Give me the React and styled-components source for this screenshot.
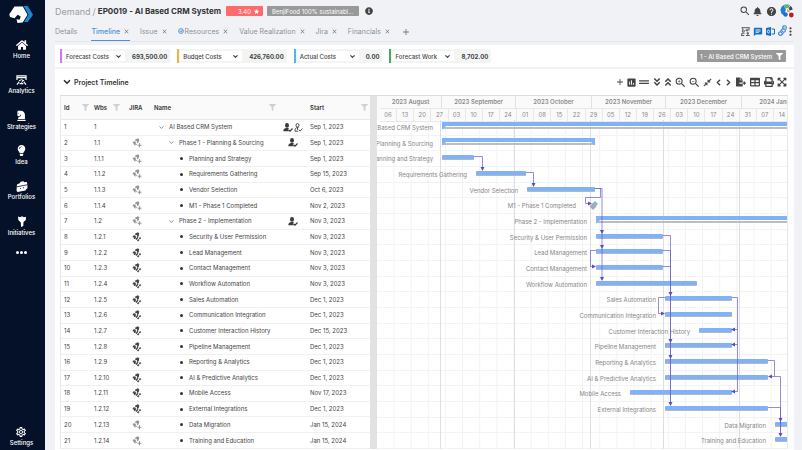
import React from "react";
import styled, { createGlobalStyle } from "styled-components";
import {
  FaHome,
  FaLightbulb,
  FaChessKnight,
  FaFilter,
  FaInfoCircle,
  FaBell,
  FaAngleDoubleDown,
  FaAngleDoubleUp,
  FaCompressAlt,
  FaFileExport,
  FaTable,
  FaPrint,
  FaExpandArrowsAlt,
  FaGripLines,
  FaLink,
  FaStar,
} from "react-icons/fa";
import {
  MdAdd,
  MdAssessment,
  MdClose,
  MdHelp,
  MdMoreVert,
  MdOutlineSettings,
  MdSearch,
  MdZoomIn,
  MdZoomOut,
  MdChat,
} from "react-icons/md";
import { ChevronDown, ChevronLeft, ChevronRight } from "lucide-react";

const HEAD_HEIGHT = 24;
const BODY_HEIGHT = 329;
const DAY = 120 / 49;

const metrics = [
  { label: "Forecast Costs", value: "693,500.00", color: "#cf7be6" },
  { label: "Budget Costs", value: "426,760.00", color: "#f2b33d" },
  { label: "Actual Costs", value: "0.00", color: "#53b9e0" },
  { label: "Forecast Work", value: "8,702.00", color: "#43b059" },
];

const tabs = [
  { label: "Details" },
  { label: "Timeline", active: true, closable: true },
  { label: "Issue", closable: true },
  { label: "Resources", closable: true, checked: true },
  { label: "Value Realization", closable: true },
  { label: "Jira", closable: true },
  { label: "Financials", closable: true },
];

// from / to are offsets on the time scale, in px
const tasks = [
  { wbs: "1", name: "AI Based CRM System", start: "Sep 1, 2023", level: 0, people: 2, from: 65, to: 520 },
  { wbs: "1.1", name: "Phase 1 - Planning & Sourcing", start: "Sep 1, 2023", level: 1, people: 1, jira: "add", from: 65, to: 218 },
  { wbs: "1.1.1", name: "Planning and Strategy", start: "Sep 1, 2023", level: 2, jira: "add", from: 65, to: 97 },
  { wbs: "1.1.2", name: "Requirements Gathering", start: "Sep 15, 2023", level: 2, jira: "add", from: 99, to: 149 },
  { wbs: "1.1.3", name: "Vendor Selection", start: "Oct 6, 2023", level: 2, jira: "add", from: 150, to: 218 },
  { wbs: "1.1.4", name: "M1 - Phase 1 Completed", start: "Nov 2, 2023", level: 2, jira: "add", milestone: true, from: 208, to: 218 },
  { wbs: "1.2", name: "Phase 2 - Implementation", start: "Nov 3, 2023", level: 1, people: 1, jira: "add", from: 219, to: 520 },
  { wbs: "1.2.1", name: "Security & User Permission", start: "Nov 3, 2023", level: 2, jira: "linked", from: 219, to: 286 },
  { wbs: "1.2.2", name: "Lead Management", start: "Nov 3, 2023", level: 2, jira: "linked", from: 219, to: 286 },
  { wbs: "1.2.3", name: "Contact Management", start: "Nov 3, 2023", level: 2, jira: "linked", from: 219, to: 286 },
  { wbs: "1.2.4", name: "Workflow Automation", start: "Nov 3, 2023", level: 2, jira: "linked", from: 219, to: 320 },
  { wbs: "1.2.5", name: "Sales Automation", start: "Dec 1, 2023", level: 2, jira: "linked", from: 288, to: 355 },
  { wbs: "1.2.6", name: "Communication Integration", start: "Dec 1, 2023", level: 2, jira: "linked", from: 288, to: 355 },
  { wbs: "1.2.7", name: "Customer Interaction History", start: "Dec 15, 2023", level: 2, jira: "linked", from: 322, to: 355 },
  { wbs: "1.2.8", name: "Pipeline Management", start: "Dec 1, 2023", level: 2, jira: "linked", from: 288, to: 355 },
  { wbs: "1.2.9", name: "Reporting & Analytics", start: "Dec 1, 2023", level: 2, jira: "linked", from: 288, to: 391 },
  { wbs: "1.2.10", name: "AI & Predictive Analytics", start: "Dec 1, 2023", level: 2, jira: "linked", from: 288, to: 391 },
  { wbs: "1.2.11", name: "Mobile Access", start: "Nov 17, 2023", level: 2, jira: "linked", from: 253, to: 355 },
  { wbs: "1.2.12", name: "External Integrations", start: "Dec 1, 2023", level: 2, jira: "linked", from: 288, to: 391 },
  { wbs: "1.2.13", name: "Data Migration", start: "Jan 15, 2024", level: 2, jira: "add", from: 398, to: 440 },
  { wbs: "1.2.14", name: "Training and Education", start: "Jan 15, 2024", level: 2, jira: "add", from: 398, to: 440 },
];

const columns = [
  { name: "Id", width: 30, filter: true },
  { name: "Wbs", width: 31, filter: true },
  { name: "JIRA", width: 29, indent: 7 },
  { name: "Name", width: 127, filter: true },
  { name: "", width: 29 },
  { name: "Start", width: 63, filter: true },
];

const months = [
  { name: "2023 August", width: 62 },
  { name: "2023 September", width: 74 },
  { name: "2023 October", width: 76 },
  { name: "2023 November", width: 74 },
  { name: "2023 December", width: 76 },
  { name: "2024 January", width: 76 },
];

const weeks = [
  "06", "13", "20", "27", "03", "10", "17", "24", "01", "08", "15", "22",
  "29", "05", "12", "19", "26", "03", "10", "17", "24", "31", "07", "14",
];

const ROW = BODY_HEIGHT / tasks.length;
const mid = (row) => Math.round(row * ROW) + 5.5;
const top = (row) => Math.round(row * ROW) + 3;

// ICONS

const Logo = () => (
  <svg width="25" height="20" viewBox="0 0 25 20" aria-label="Home page">
    <path d="M14.500 1h4.200L24 9.800 18.700 17h-3.600l4.400-7.200z" fill="#1c86d6" />
    <path
      d="M5.500 1.500h8.300L18.500 9.700 13.700 17.500 8.500 18l-1-3.700 3.100.5 1.100-3.300-3-1.800-3.200 3.600L1 11.900.3 9.300z"
      fill="#fff"
    />
  </svg>
);

const AnalyticsIcon = () => (
  <svg width="11" height="10" viewBox="0 0 12 11" fill="none" stroke="#fff">
    <path d="M1 5.500V1h10v4.500M1 2.800h10" strokeWidth="1.300" />
    <path d="M3 6.500a4.500 4.500 0 0 1 6 0M6 8.500l2-3" strokeWidth="1.100" />
    <path d="M1 10.500l2.500-3M11 10.500l-2.500-3M4 9.500h4" strokeWidth="1.300" />
  </svg>
);

const PortfolioIcon = () => (
  <svg width="12" height="11" viewBox="0 0 12 11">
    <path d="M1 3.500L4 2l.5-1.200 3-.6.8 1L11 1l.5 6-1.500 1.500-.5 1L1.500 11 .5 9.500z" fill="#fff" />
    <path d="M1 5.800l10-2M4 7.500l1-.2M7 6.800l1-.2" stroke="#051128" strokeWidth=".8" />
  </svg>
);

const InitiativeIcon = () => (
  <svg width="10" height="11" viewBox="0 0 10 11" fill="#fff">
    <path d="M1 .5l2 .8L5 .3l2 1L9 .8 8.800 4 6.500 6 6.300 10 4 11 3.800 6.500 1.300 4z" />
  </svg>
);

const JiraIcon = ({ kind }) => {
  const color = kind === "linked" ? "#44484c" : "#94979a";
  return (
    <svg width="10" height="10" viewBox="0 0 10 10" role="img" aria-label={kind}>
      <path d="M3 1.700L5.800.3l1.500 1-.6 2.900-1.300.9-.7-.9.300-1.300-1.500.2z" fill={color} />
      <path d="M1.600 3.300l1.900.3.500 1.600-.7 1.700-1.400.2.100-1.400L.4 5z" fill={color} />
      {kind === "linked" ? (
        <>
          <path d="M3.400 6.900l2-2.200 1.100.8-1.900 2.400z" fill={color} />
          <path d="M5.600 8.900L6.800 7.500M7.400 7L8.600 5.500" stroke={color} strokeWidth="1.600" fill="none" />
        </>
      ) : (
        <>
          <path d="M3.400 7.400l1.600-1.700" stroke={color} strokeWidth="1" />
          <path d="M7.500 5.200v4M5.500 7.200h4" stroke={color} strokeWidth="1.100" />
        </>
      )}
    </svg>
  );
};

const PersonIcon = () => (
  <svg width="10" height="9" viewBox="0 0 10 9" fill="#3a3a3a">
    <ellipse cx="4" cy="2.400" rx="2" ry="2.300" />
    <path d="M.3 8.200c0-2 1-2.700 2.700-3.200h2L6 5.800 4.800 6.700l1.400 1.500z" />
    <path d="M5.500 6.700l1.500 1.400 2.500-2.600" fill="none" stroke="#3a3a3a" strokeWidth="1.200" />
  </svg>
);

const PersonOutline = () => (
  <svg width="9" height="9" viewBox="0 0 9 9" fill="none" stroke="#3a3a3a" strokeWidth=".9">
    <ellipse cx="3.500" cy="2.300" rx="1.500" ry="1.800" />
    <path d="M4.500 4.400C1.500 4.300.8 6 1 8.200h3.200M4.800 6.700l1.300 1.400L8.500 5.500" />
    <path d="M3.500 4.500v2.300" />
  </svg>
);

const BoardIcon = () => (
  <svg width="9" height="9" viewBox="0 0 9 9" fill="none" stroke="#4a4a4a" strokeWidth=".9">
    <path d="M.5.7h8.300M1.500 1v1.500M8 1v2.500M0 8.500h3.300M5 8.500h3.800M4.500 3.200h3M6 1.800v2.800M5.500 6.200h2.500M6.800 5v3" />
    <circle cx="2.300" cy="4" r="1.100" />
    <path d="M.8 8V6.200h2.900" />
  </svg>
);

const OutlookIcon = () => (
  <svg width="9" height="9" viewBox="0 0 9 9">
    <path d="M0 1l5-1v9L0 8z" fill="#1470c4" />
    <path d="M5.500 2H8.500v5h-3" fill="none" stroke="#1470c4" />
    <ellipse cx="2.500" cy="4.500" rx="1.100" ry="1.500" fill="none" stroke="#fff" strokeWidth=".8" />
  </svg>
);

const Avatar = () => (
  <svg width="14" height="14" viewBox="0 0 14 14" role="img" aria-label="User">
    <circle cx="6.500" cy="6.500" r="6.300" fill="#fff" />
    <path d="M.4 6A6.300 6.300 0 0 1 3.500 1L6 5.500 4 11 1.500 10z" fill="#1f7fd1" />
    <path d="M3.500 1A6.300 6.300 0 0 1 10 1.300L8.500 4 5.500 4.500z" fill="#5bb58c" />
    <path d="M10.500 1.800a6.300 6.300 0 0 1 2.200 4L10 6.500 8.500 4.500z" fill="#38495c" />
    <path d="M7 5l3 1.500-.5 2L7 8z" fill="#f0a83c" />
    <circle cx="5.500" cy="10.500" r="2.300" fill="#1f6ec9" />
    <circle cx="11.300" cy="11" r="2.400" fill="#d0141f" />
  </svg>
);

// CHART

const arrows = {
  down: "-2,-3 2,-3 0,1",
  right: "-3,-2 -3,2 1,0",
  left: "3,-2 3,2 -1,0",
};

const Arrow = ({ x, y, to }) => (
  <polygon points={arrows[to]} transform={`translate(${x} ${y})`} fill="#574cc0" />
);

const Bar = ({ task, row }) => {
  const y = top(row);
  const width = task.to - task.from;

  if (task.milestone) {
    return (
      <g>
        <path d={`M${task.to} ${y}l3 3-3 3-3-3z`} fill="#80b1fb" />
        <path d={`M${task.to - 2} ${y + 2}l3.500 3.500-3.500 3.500-3.500-3.500z`} fill="#a9a9ac" />
      </g>
    );
  }
  if (task.level < 2) {
    return (
      <g>
        <rect x={task.from + 1} y={y + 4} width={width - 1} height="2" fill="#bdbdbd" />
        <rect x={task.from} y={y - 1} width={width} height="4" fill="#80b1fb" />
        <path d={`M${task.from} ${y + 3}h4l-4 3.500zM${task.to} ${y + 3}h-4l4 3.500z`} fill="#80b1fb" />
      </g>
    );
  }
  return (
    <g>
      <rect x={task.from} y={y + 2} width={width} height="4" rx="1" fill="#b4b8bd" />
      <rect x={task.from} y={y + 1} width={width} height="4" rx="1" fill="#80b1fb" />
    </g>
  );
};

const Chart = () => {
  const sundays = weeks.map((_, i) => 17 + i * 7 * DAY);
  const monthStarts = [63, 137, 213, 286, 362];

  return (
    <ChartSvg role="img" aria-label="Project schedule">
      <g stroke="#f3f3f4">
        {sundays.map((x) => (
          <line key={x} x1={x} x2={x} y1="0" y2={BODY_HEIGHT} />
        ))}
        {tasks.map((t, i) => (
          <line
            key={t.wbs}
            x1="0"
            x2="100%"
            y1={Math.round((i + 1) * ROW) - 0.5}
            y2={Math.round((i + 1) * ROW) - 0.5}
          />
        ))}
      </g>
      <g stroke="#dedee0">
        {monthStarts.map((x) => (
          <line key={x} x1={x + 0.5} x2={x + 0.5} y1="0" y2="100%" />
        ))}
      </g>
      {tasks.map((t, i) => (
        <ChartLabel key={t.wbs} x={t.from - 9} y={Math.round(i * ROW) + 10} textAnchor="end">
          {t.name}
        </ChartLabel>
      ))}
      {tasks.map((t, i) => (
        <Bar key={t.wbs} task={t} row={i} />
      ))}
      <g fill="none" stroke="#6a60c8" strokeOpacity="0.7">
        <path d={`M97 ${mid(2)}H105.500V${top(3)}`} />
        <path d={`M149 ${mid(3)}H156.500V${top(4)}`} />
        <path d={`M218 ${mid(4)}H223.500V${top(5) - 3.5}H208.500V${mid(5)}H213`} />
        <path d={`M218 ${mid(4)}H225V${top(10)}`} />
        <path d={`M286 ${mid(7)}H293.500V${top(18)}`} />
        <path d={`M286 ${mid(8)}H293.500V${top(18)}`} />
        <path d={`M286 ${mid(9)}H293.500`} />
        <path d={`M219 ${mid(8)}H213.500V${mid(9)}H217`} />
        <path d={`M288 ${mid(11)}H281.500V${mid(12)}H286`} />
        <path d={`M355 ${mid(11)}H360.500V${mid(17)}H357`} />
        <path d={`M360.500 ${mid(13)}H357M360.500 ${mid(14)}H357`} />
        <path d={`M391 ${mid(15)}H397.500V${mid(16)}`} />
        <path d={`M392 ${mid(16)}H403.500V${top(20)}`} />
        <path d={`M391 ${mid(18)}H403.500V${top(20)}`} />
      </g>
      <Arrow x={105.5} y={top(3)} to="down" />
      <Arrow x={156.5} y={top(4)} to="down" />
      <Arrow x={214} y={mid(5)} to="right" />
      {[7, 8, 10].map((row) => (
        <Arrow key={row} x={225} y={top(row)} to="down" />
      ))}
      {[11, 14, 15, 18].map((row) => (
        <Arrow key={row} x={293.5} y={top(row)} to="down" />
      ))}
      <Arrow x={218} y={mid(9)} to="right" />
      <Arrow x={287} y={mid(12)} to="right" />
      {[13, 14, 17].map((row) => (
        <Arrow key={row} x={355} y={mid(row)} to="left" />
      ))}
      <Arrow x={392} y={mid(16)} to="left" />
      {[19, 20].map((row) => (
        <Arrow key={row} x={403.5} y={top(row)} to="down" />
      ))}
    </ChartSvg>
  );
};

const navItems = [
  { label: "Home", icon: <FaHome size={12} /> },
  { label: "Analytics", icon: <AnalyticsIcon /> },
  { label: "Strategies", icon: <FaChessKnight size={11} /> },
  { label: "Idea", icon: <FaLightbulb size={11} /> },
  { label: "Portfolios", icon: <PortfolioIcon /> },
  { label: "Initiatives", icon: <InitiativeIcon /> },
];

const tools = [
  { label: "Add", icon: <MdAdd size={10} />, width: 11 },
  { label: "Chart", icon: <MdAssessment size={11} />, width: 12 },
  { label: "Lines", icon: <FaGripLines size={10} />, width: 14 },
  { label: "Expand all", icon: <FaAngleDoubleDown size={10} />, width: 11 },
  { label: "Collapse all", icon: <FaAngleDoubleUp size={10} />, width: 11 },
  { label: "Zoom in", icon: <MdZoomIn size={13} />, width: 14 },
  { label: "Zoom out", icon: <MdZoomOut size={13} />, width: 14 },
  { label: "Zoom to fit", icon: <FaCompressAlt size={9} />, width: 13 },
  { label: "Previous", icon: <ChevronLeft size={9} strokeWidth={4} />, width: 9 },
  { label: "Next", icon: <ChevronRight size={9} strokeWidth={4} />, width: 10 },
  { label: "Export", icon: <FaFileExport size={10} />, width: 15 },
  { label: "Columns", icon: <FaTable size={10} />, width: 14 },
  { label: "Print", icon: <FaPrint size={10} />, width: 14 },
  { label: "Full screen", icon: <FaExpandArrowsAlt size={10} />, width: 12 },
];

export default function App() {
  return (
    <>
      <GlobalStyle />
      <Page>
        <Sidebar>
          <Brand href="#">
            <Logo />
          </Brand>
          <Nav>
            {navItems.map((item) => (
              <NavLink key={item.label} href="#">
                <NavIcon>{item.icon}</NavIcon>
                {item.label}
              </NavLink>
            ))}
          </Nav>
          <MoreButton type="button" aria-label="More">
            <Dot />
            <Dot />
            <Dot />
          </MoreButton>
          <SettingsLink href="#">
            <NavIcon>
              <MdOutlineSettings size={12} />
            </NavIcon>
            Settings
          </SettingsLink>
        </Sidebar>

        <Main>
          <TitleBar>
            <Crumb href="#">Demand</Crumb>
            <Slash>/</Slash>
            <Title>EP0019 - AI Based CRM System</Title>
            <Score>
              3.40 <FaStar size={5} />
            </Score>
            <Tag>BenjiFood 100% sustainabl...</Tag>
            <IconButton type="button" aria-label="Info">
              <FaInfoCircle size={8} />
            </IconButton>
            <Actions>
              <IconButton type="button" aria-label="Search" $width={13}>
                <MdSearch size={12} />
              </IconButton>
              <IconButton type="button" aria-label="Notifications" $width={13}>
                <FaBell size={9} />
              </IconButton>
              <IconButton type="button" aria-label="Help" $width={15}>
                <MdHelp size={11} />
              </IconButton>
              <IconButton type="button" aria-label="Account" $width={15}>
                <Avatar />
              </IconButton>
            </Actions>
          </TitleBar>

          <TabBar>
            <Tabs>
              {tabs.map((tab) => (
                <Tab key={tab.label} $active={tab.active} $closable={tab.closable}>
                  <TabLink href="#" $active={tab.active}>
                    {tab.checked && (
                      <svg width="6" height="6" viewBox="0 0 6 6" fill="#cfe2f6" stroke="#5f9bd8">
                        <circle cx="3" cy="3" r="2.400" />
                        <path d="M1.800 3l1 1 1.600-2" fill="none" />
                      </svg>
                    )}
                    {tab.label}
                  </TabLink>
                  {tab.closable && (
                    <CloseTab type="button" aria-label={`Close ${tab.label}`}>
                      <MdClose size={7} />
                    </CloseTab>
                  )}
                </Tab>
              ))}
              <CloseTab type="button" aria-label="Add tab">
                <MdAdd size={10} />
              </CloseTab>
            </Tabs>
            <Actions>
              <IconButton type="button" aria-label="Board" $width={10}>
                <BoardIcon />
              </IconButton>
              <IconButton type="button" aria-label="Chat" $width={15} $color="#1470c4">
                <MdChat size={10} />
              </IconButton>
              <IconButton type="button" aria-label="Outlook" $width={11}>
                <OutlookIcon />
              </IconButton>
              <IconButton type="button" aria-label="Links" $width={11} $color="#3f82cc">
                <FaLink size={8} />
                <LinkCount>4</LinkCount>
              </IconButton>
              <IconButton type="button" aria-label="More actions" $width={7}>
                <MdMoreVert size={13} />
              </IconButton>
            </Actions>
          </TabBar>

          <MetricBar>
            {metrics.map((m) => (
              <Metric key={m.label} $color={m.color}>
                <SelectWrap>
                  <Select aria-label={m.label} defaultValue={m.label}>
                    <option>{m.label}</option>
                  </Select>
                  <ChevronDown size={7} strokeWidth={4} />
                </SelectWrap>
                {m.value}
              </Metric>
            ))}
            <FilterButton type="button">
              1 - AI Based CRM System
              <FaFilter size={7} />
            </FilterButton>
          </MetricBar>

          <Panel>
            <PanelHeader>
              <PanelTitle>
                <ChevronDown size={10} strokeWidth={4} />
                Project Timeline
              </PanelTitle>
              <Toolbar>
                {tools.map((tool) => (
                  <IconButton key={tool.label} type="button" aria-label={tool.label} $width={tool.width}>
                    {tool.icon}
                  </IconButton>
                ))}
              </Toolbar>
            </PanelHeader>

            <Gantt>
              <Table>
                <colgroup>
                  {columns.map((c) => (
                    <Col key={c.name} $width={c.width} />
                  ))}
                </colgroup>
                <thead>
                  <tr>
                    {columns.map((c) => (
                      <Th key={c.name} scope="col" $indent={c.indent}>
                        <ThContent>
                          {c.name}
                          {c.filter && <FaFilter size={7} />}
                        </ThContent>
                      </Th>
                    ))}
                  </tr>
                </thead>
                <tbody>
                  {tasks.map((t, i) => (
                    <tr key={t.wbs}>
                      <Td>{i + 1}</Td>
                      <Td>{t.wbs}</Td>
                      <Td>
                        <JiraCell>{t.jira && <JiraIcon kind={t.jira} />}</JiraCell>
                      </Td>
                      <Td>
                        <Name $level={t.level}>
                          {t.level < 2 ? <ChevronDown size={7} strokeWidth={2} /> : <Bullet />}
                          {t.name}
                        </Name>
                      </Td>
                      <Td>
                        <People>
                          {t.people && <PersonIcon />}
                          {t.people === 2 && <PersonOutline />}
                        </People>
                      </Td>
                      <Td>{t.start}</Td>
                    </tr>
                  ))}
                </tbody>
              </Table>
              <Splitter />
              <ChartPane>
                <Scale>
                  <Months>
                    {months.map((m) => (
                      <Month key={m.name} $width={m.width}>
                        {m.name}
                      </Month>
                    ))}
                  </Months>
                  <Weeks>
                    {weeks.map((w, i) => (
                      <Week key={i}>{w}</Week>
                    ))}
                  </Weeks>
                </Scale>
                <Chart />
              </ChartPane>
            </Gantt>
          </Panel>
        </Main>
      </Page>
    </>
  );
}

const GlobalStyle = createGlobalStyle`
  * {
    box-sizing: border-box;
  }

  body {
    margin: 0;
    font-family: Inter, "Liberation Sans", sans-serif;
    font-size: 6px;
    color: #444;
    background-color: #f0f2f6;
  }

  button, select {
    font: inherit;
    color: inherit;
    border: none;
    padding: 0;
    background-color: transparent;
    cursor: pointer;
  }

  a {
    color: inherit;
    text-decoration: none;
  }

  svg {
    flex-shrink: 0;
  }
`;

const Page = styled.div`
  display: flex;
  min-height: 100vh;
`;

// SIDEBAR

const Sidebar = styled.aside`
  display: flex;
  flex-direction: column;
  align-items: center;
  flex: 0 0 45px;
  padding: 5px 2px 2px 0;
  background-color: #051128;
  color: white;
  font-size: 6px;
  font-weight: 500;
`;

const Brand = styled.a`
  display: flex;
  height: 34px;
`;

const Nav = styled.nav`
  display: grid;
  grid-auto-rows: 1fr;
  height: 212px;
`;

const NavLink = styled.a`
  display: flex;
  flex-direction: column;
  align-items: center;
  line-height: 10px;
`;

const SettingsLink = styled(NavLink)`
  margin-top: auto;
`;

const NavIcon = styled.span`
  display: flex;
  align-items: center;
  height: 12px;
`;

const MoreButton = styled.button`
  display: flex;
  gap: 1px;
`;

const Dot = styled.span`
  width: 3px;
  height: 3px;
  border-radius: 50%;
  background-color: white;
`;

// HEADER

const Main = styled.main`
  display: flex;
  flex-direction: column;
  flex: 1;
  min-width: 0;
  padding: 0 8px 0 10px;
`;

const TitleBar = styled.header`
  display: flex;
  align-items: center;
  height: 22px;
`;

const Crumb = styled.a`
  color: #9a9da1;
  font-size: 9px;
`;

const Slash = styled.span`
  color: #9a9da1;
  font-size: 9px;
  margin: 0 2px;
`;

const Title = styled.h1`
  margin: 0 5px 0 0;
  font-size: 8px;
  font-weight: 700;
  color: #333;
  white-space: nowrap;
`;

const Chip = styled.span`
  display: flex;
  align-items: center;
  height: 10px;
  border-radius: 1px;
  color: white;
  font-size: 6px;
  white-space: nowrap;
`;

const Score = styled(Chip)`
  justify-content: flex-end;
  gap: 3px;
  width: 37px;
  padding-right: 4px;
  margin-right: 4px;
  background-color: #ff6b6b;
`;

const Tag = styled(Chip)`
  width: 92px;
  padding-left: 5px;
  margin-right: 6px;
  background-color: #999;
`;

const Actions = styled.div`
  display: flex;
  align-items: center;
  margin-left: auto;
`;

const IconButton = styled.button`
  position: relative;
  display: flex;
  align-items: center;
  justify-content: center;
  width: ${(props) => (props.$width ? `${props.$width}px` : "auto")};
  color: ${(props) => props.$color || "#444"};
`;

const LinkCount = styled.span`
  position: absolute;
  top: -3px;
  right: 0;
  width: 5px;
  height: 5px;
  border-radius: 50%;
  background-color: #5c9ae0;
  color: white;
  font-size: 4px;
  line-height: 5px;
`;

const TabBar = styled.div`
  display: flex;
  align-items: stretch;
  height: 20px;
  margin-bottom: 3px;
  border-bottom: 1px solid #e6e8ec;
`;

const Tabs = styled.nav`
  display: flex;
  gap: 10px;
`;

const Tab = styled.div`
  display: flex;
  align-items: center;
  gap: 3px;
  padding-right: ${(props) => (props.$closable ? "0" : "4px")};
  border-bottom: 1px solid ${(props) => (props.$active ? "#4a90d9" : "transparent")};
`;

const TabLink = styled.a`
  display: flex;
  align-items: center;
  gap: 1px;
  font-size: 7px;
  white-space: nowrap;
  font-weight: ${(props) => (props.$active ? 500 : 400)};
  color: ${(props) => (props.$active ? "#4a8fd6" : "#8c939b")};
`;

const CloseTab = styled.button`
  display: flex;
  align-items: center;
  color: #777;
`;

// METRICS

const MetricBar = styled.section`
  display: flex;
  align-items: center;
  gap: 7px;
  height: 22px;
  margin-bottom: 2px;
  padding: 0 8px 0 5px;
  background-color: white;
`;

const Metric = styled.div`
  display: flex;
  align-items: center;
  gap: 7px;
  height: 14px;
  padding: 0 3px 0 1px;
  border-left: 2px solid ${(props) => props.$color};
  background-color: #f3f5f5;
  font-weight: 700;
  color: #444;
`;

const SelectWrap = styled.div`
  display: flex;
  align-items: center;
  width: 62px;
  height: 10px;
  padding-right: 3px;
  background-color: white;
`;

const Select = styled.select`
  appearance: none;
  flex: 1;
  min-width: 0;
  padding-left: 3px;
  font-size: 6px;
  font-weight: 500;
`;

const FilterButton = styled.button`
  display: flex;
  align-items: center;
  gap: 4px;
  height: 12px;
  margin-left: auto;
  padding: 0 3px;
  border-radius: 1px;
  background-color: #999;
  color: white;
  font-weight: 500;
  white-space: nowrap;
`;

// TIMELINE

const Panel = styled.section`
  flex: 1;
  padding: 0 6px 0 5px;
  background-color: white;
`;

const PanelHeader = styled.div`
  display: flex;
  align-items: center;
  justify-content: space-between;
  height: 26px;
  padding-left: 2px;
`;

const PanelTitle = styled.h2`
  display: flex;
  align-items: center;
  gap: 2px;
  margin: 0;
  font-size: 7px;
  font-weight: 600;
  color: #333;
`;

const Toolbar = styled.div`
  display: flex;
  align-items: center;
`;

const Gantt = styled.div`
  display: flex;
  border: 1px solid #e8e8ea;
  border-top-color: #dcdcde;
  border-bottom: none;
`;

const Table = styled.table`
  flex: 0 0 309px;
  width: 309px;
  height: ${HEAD_HEIGHT + BODY_HEIGHT}px;
  table-layout: fixed;
  border-spacing: 0;
`;

const Col = styled.col`
  width: ${(props) => props.$width}px;
`;

const Th = styled.th`
  height: ${HEAD_HEIGHT}px;
  padding: 0 0 0 ${(props) => props.$indent || 3}px;
  border-bottom: 1px solid #e8e8ea;
  background-color: #fafafa;
  color: #333;
  text-align: left;
  font-weight: 600;
`;

const ThContent = styled.div`
  display: flex;
  align-items: center;
  justify-content: space-between;
  padding-right: 2px;

  svg {
    color: #cfd0d2;
  };
`;

const Td = styled.td`
  padding: 0 0 0 3px;
  border-bottom: 1px solid #f0f0f1;
  line-height: 10px;
  white-space: nowrap;
`;

const JiraCell = styled.div`
  display: flex;
  padding-left: 7px;
`;

const Name = styled.div`
  display: flex;
  align-items: center;
  gap: 4px;
  padding-left: ${(props) => 4 + props.$level * 10}px;
`;

const Bullet = styled.span`
  width: 3px;
  height: 3px;
  margin: 0 2px;
  border-radius: 50%;
  background-color: #333;
`;

const People = styled.div`
  display: flex;
  align-items: center;
  justify-content: center;
  gap: 1px;
  padding-right: 3px;
`;

const Splitter = styled.div`
  flex: 0 0 7px;
  background-color: #e2e2e4;
`;

const ChartPane = styled.div`
  flex: 1;
  min-width: 0;
  overflow: hidden;
`;

const Scale = styled.div`
  display: grid;
  grid-template-rows: 1fr 1fr;
  height: ${HEAD_HEIGHT}px;
  padding-left: 3px;
  background-color: #fafafa;
  color: #8a8a8c;
`;

const Months = styled.div`
  display: flex;
`;

const Month = styled.div`
  flex: 0 0 ${(props) => props.$width}px;
  border-right: 1px solid #e2e2e4;
  border-bottom: 1px solid #e8e8ea;
  line-height: 12px;
  text-align: center;
  font-weight: 600;
`;

const Weeks = styled.div`
  display: grid;
  grid-template-columns: repeat(24, 1fr);
  width: 411px;
`;

const Week = styled.div`
  border-right: 1px solid #e8e8ea;
  border-bottom: 1px solid #e8e8ea;
  line-height: 12px;
  text-align: center;
`;

const ChartSvg = styled.svg`
  display: block;
  width: 100%;
  height: ${BODY_HEIGHT}px;
`;

const ChartLabel = styled.text`
  font-size: 6px;
  fill: #858587;
`;
